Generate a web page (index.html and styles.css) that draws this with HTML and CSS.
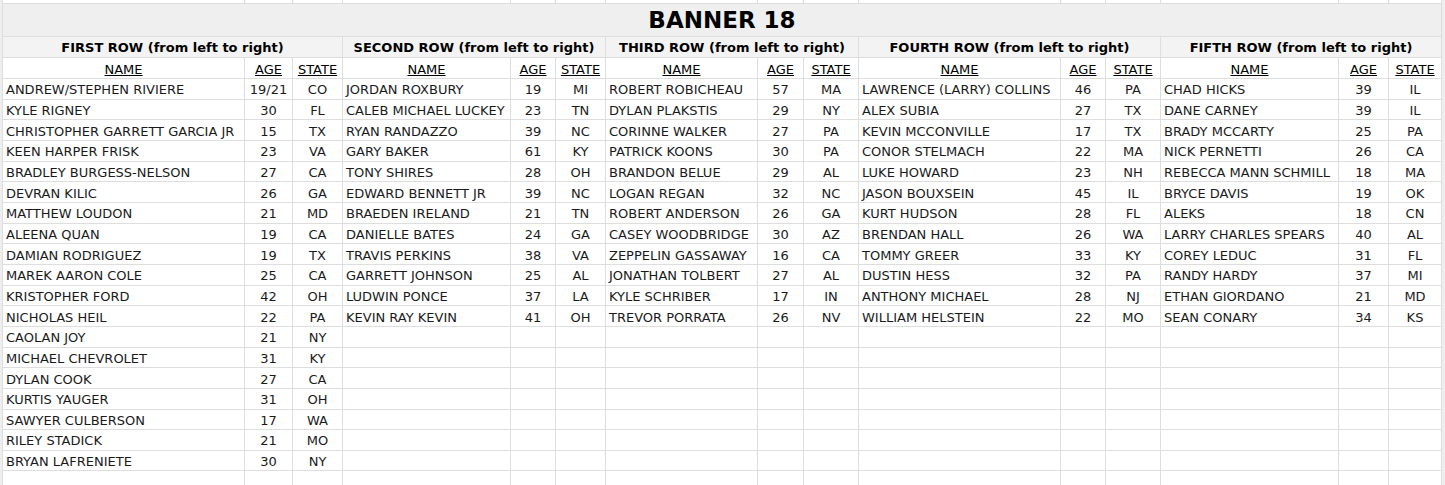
FILE: index.html
```html
<!DOCTYPE html>
<html lang="en">
<head>
<meta charset="utf-8">
<title>Banner 18</title>
<link rel="stylesheet" href="styles.css">
</head>
<body>
<div class="sheet">
  <div></div><div></div><div></div><div></div><div></div><div></div><div></div><div></div><div></div><div></div><div></div><div></div><div></div><div></div><div></div>
  <div class="title">BANNER 18</div>
  <div class="grp">FIRST ROW (from left to right)</div>
  <div class="grp">SECOND ROW (from left to right)</div>
  <div class="grp">THIRD ROW (from left to right)</div>
  <div class="grp">FOURTH ROW (from left to right)</div>
  <div class="grp">FIFTH ROW (from left to right)</div>
  <div class="sub">NAME</div><div class="sub">AGE</div><div class="sub">STATE</div>
  <div class="sub">NAME</div><div class="sub">AGE</div><div class="sub">STATE</div>
  <div class="sub">NAME</div><div class="sub">AGE</div><div class="sub">STATE</div>
  <div class="sub">NAME</div><div class="sub">AGE</div><div class="sub">STATE</div>
  <div class="sub">NAME</div><div class="sub">AGE</div><div class="sub">STATE</div>

  <div class="n">ANDREW/STEPHEN RIVIERE</div><div class="m">19/21</div><div class="m">CO</div>
  <div class="n">JORDAN ROXBURY</div><div class="m">19</div><div class="m">MI</div>
  <div class="n">ROBERT ROBICHEAU</div><div class="m">57</div><div class="m">MA</div>
  <div class="n">LAWRENCE (LARRY) COLLINS</div><div class="m">46</div><div class="m">PA</div>
  <div class="n">CHAD HICKS</div><div class="m">39</div><div class="m">IL</div>

  <div class="n">KYLE RIGNEY</div><div class="m">30</div><div class="m">FL</div>
  <div class="n">CALEB MICHAEL LUCKEY</div><div class="m">23</div><div class="m">TN</div>
  <div class="n">DYLAN PLAKSTIS</div><div class="m">29</div><div class="m">NY</div>
  <div class="n">ALEX SUBIA</div><div class="m">27</div><div class="m">TX</div>
  <div class="n">DANE CARNEY</div><div class="m">39</div><div class="m">IL</div>

  <div class="n">CHRISTOPHER GARRETT GARCIA JR</div><div class="m">15</div><div class="m">TX</div>
  <div class="n">RYAN RANDAZZO</div><div class="m">39</div><div class="m">NC</div>
  <div class="n">CORINNE WALKER</div><div class="m">27</div><div class="m">PA</div>
  <div class="n">KEVIN MCCONVILLE</div><div class="m">17</div><div class="m">TX</div>
  <div class="n">BRADY MCCARTY</div><div class="m">25</div><div class="m">PA</div>

  <div class="n">KEEN HARPER FRISK</div><div class="m">23</div><div class="m">VA</div>
  <div class="n">GARY BAKER</div><div class="m">61</div><div class="m">KY</div>
  <div class="n">PATRICK KOONS</div><div class="m">30</div><div class="m">PA</div>
  <div class="n">CONOR STELMACH</div><div class="m">22</div><div class="m">MA</div>
  <div class="n">NICK PERNETTI</div><div class="m">26</div><div class="m">CA</div>

  <div class="n">BRADLEY BURGESS-NELSON</div><div class="m">27</div><div class="m">CA</div>
  <div class="n">TONY SHIRES</div><div class="m">28</div><div class="m">OH</div>
  <div class="n">BRANDON BELUE</div><div class="m">29</div><div class="m">AL</div>
  <div class="n">LUKE HOWARD</div><div class="m">23</div><div class="m">NH</div>
  <div class="n">REBECCA MANN SCHMILL</div><div class="m">18</div><div class="m">MA</div>

  <div class="n">DEVRAN KILIC</div><div class="m">26</div><div class="m">GA</div>
  <div class="n">EDWARD BENNETT JR</div><div class="m">39</div><div class="m">NC</div>
  <div class="n">LOGAN REGAN</div><div class="m">32</div><div class="m">NC</div>
  <div class="n">JASON BOUXSEIN</div><div class="m">45</div><div class="m">IL</div>
  <div class="n">BRYCE DAVIS</div><div class="m">19</div><div class="m">OK</div>

  <div class="n">MATTHEW LOUDON</div><div class="m">21</div><div class="m">MD</div>
  <div class="n">BRAEDEN IRELAND</div><div class="m">21</div><div class="m">TN</div>
  <div class="n">ROBERT ANDERSON</div><div class="m">26</div><div class="m">GA</div>
  <div class="n">KURT HUDSON</div><div class="m">28</div><div class="m">FL</div>
  <div class="n">ALEKS</div><div class="m">18</div><div class="m">CN</div>

  <div class="n">ALEENA QUAN</div><div class="m">19</div><div class="m">CA</div>
  <div class="n">DANIELLE BATES</div><div class="m">24</div><div class="m">GA</div>
  <div class="n">CASEY WOODBRIDGE</div><div class="m">30</div><div class="m">AZ</div>
  <div class="n">BRENDAN HALL</div><div class="m">26</div><div class="m">WA</div>
  <div class="n">LARRY CHARLES SPEARS</div><div class="m">40</div><div class="m">AL</div>

  <div class="n">DAMIAN RODRIGUEZ</div><div class="m">19</div><div class="m">TX</div>
  <div class="n">TRAVIS PERKINS</div><div class="m">38</div><div class="m">VA</div>
  <div class="n">ZEPPELIN GASSAWAY</div><div class="m">16</div><div class="m">CA</div>
  <div class="n">TOMMY GREER</div><div class="m">33</div><div class="m">KY</div>
  <div class="n">COREY LEDUC</div><div class="m">31</div><div class="m">FL</div>

  <div class="n">MAREK AARON COLE</div><div class="m">25</div><div class="m">CA</div>
  <div class="n">GARRETT JOHNSON</div><div class="m">25</div><div class="m">AL</div>
  <div class="n">JONATHAN TOLBERT</div><div class="m">27</div><div class="m">AL</div>
  <div class="n">DUSTIN HESS</div><div class="m">32</div><div class="m">PA</div>
  <div class="n">RANDY HARDY</div><div class="m">37</div><div class="m">MI</div>

  <div class="n">KRISTOPHER FORD</div><div class="m">42</div><div class="m">OH</div>
  <div class="n">LUDWIN PONCE</div><div class="m">37</div><div class="m">LA</div>
  <div class="n">KYLE SCHRIBER</div><div class="m">17</div><div class="m">IN</div>
  <div class="n">ANTHONY MICHAEL</div><div class="m">28</div><div class="m">NJ</div>
  <div class="n">ETHAN GIORDANO</div><div class="m">21</div><div class="m">MD</div>

  <div class="n">NICHOLAS HEIL</div><div class="m">22</div><div class="m">PA</div>
  <div class="n">KEVIN RAY KEVIN</div><div class="m">41</div><div class="m">OH</div>
  <div class="n">TREVOR PORRATA</div><div class="m">26</div><div class="m">NV</div>
  <div class="n">WILLIAM HELSTEIN</div><div class="m">22</div><div class="m">MO</div>
  <div class="n">SEAN CONARY</div><div class="m">34</div><div class="m">KS</div>

  <div class="n">CAOLAN JOY</div><div class="m">21</div><div class="m">NY</div>
  <div></div><div></div><div></div><div></div><div></div><div></div><div></div><div></div><div></div><div></div><div></div><div></div>

  <div class="n">MICHAEL CHEVROLET</div><div class="m">31</div><div class="m">KY</div>
  <div></div><div></div><div></div><div></div><div></div><div></div><div></div><div></div><div></div><div></div><div></div><div></div>

  <div class="n">DYLAN COOK</div><div class="m">27</div><div class="m">CA</div>
  <div></div><div></div><div></div><div></div><div></div><div></div><div></div><div></div><div></div><div></div><div></div><div></div>

  <div class="n">KURTIS YAUGER</div><div class="m">31</div><div class="m">OH</div>
  <div></div><div></div><div></div><div></div><div></div><div></div><div></div><div></div><div></div><div></div><div></div><div></div>

  <div class="n">SAWYER CULBERSON</div><div class="m">17</div><div class="m">WA</div>
  <div></div><div></div><div></div><div></div><div></div><div></div><div></div><div></div><div></div><div></div><div></div><div></div>

  <div class="n">RILEY STADICK</div><div class="m">21</div><div class="m">MO</div>
  <div></div><div></div><div></div><div></div><div></div><div></div><div></div><div></div><div></div><div></div><div></div><div></div>

  <div class="n">BRYAN LAFRENIETE</div><div class="m">30</div><div class="m">NY</div>
  <div></div><div></div><div></div><div></div><div></div><div></div><div></div><div></div><div></div><div></div><div></div><div></div>

  <div></div><div></div><div></div><div></div><div></div><div></div><div></div><div></div><div></div><div></div><div></div><div></div><div></div><div></div><div></div>
</div>
</body>
</html>
```

FILE: styles.css
```css
html, body {
  margin: 0;
  padding: 0;
}

body {
  background: #eeeeee;
  width: 1445px;
  height: 485px;
  overflow: hidden;
  font-family: Verdana, "DejaVu Sans", sans-serif;
  font-size: 13px;
  color: #1a1a1a;
}

.sheet {
  display: grid;
  grid-template-columns: 241px 47px 49px 167px 44px 49px 151px 45px 54px 201px 44px 54px 177px 49px 52px;
  grid-template-rows: 3px 32px 20px 20px repeat(19, 19.667px) 20px;
  gap: 1px;
  padding: 0 1px 1px 1px;
  margin-left: 2px;
  width: max-content;
  background: #dedede;
}

.sheet > div {
  background: #ffffff;
  display: flex;
  align-items: center;
  white-space: nowrap;
  overflow: hidden;
  line-height: 1;
}

.sheet > .title {
  grid-column: 1 / -1;
  background: #efefef;
  justify-content: center;
  font-weight: bold;
  font-size: 23px;
  color: #000000;
  padding-top: 1px;
}

.sheet > .grp {
  grid-column: span 3;
  background: #f3f3f3;
  justify-content: center;
  font-weight: bold;
  color: #000000;
}

.sheet > .sub {
  justify-content: center;
  text-decoration: underline;
  color: #000000;
  padding-top: 2px;
}

.sheet > .n {
  padding-left: 3px;
  padding-top: 2px;
}

.sheet > .m {
  justify-content: center;
  padding-top: 2px;
}
```
